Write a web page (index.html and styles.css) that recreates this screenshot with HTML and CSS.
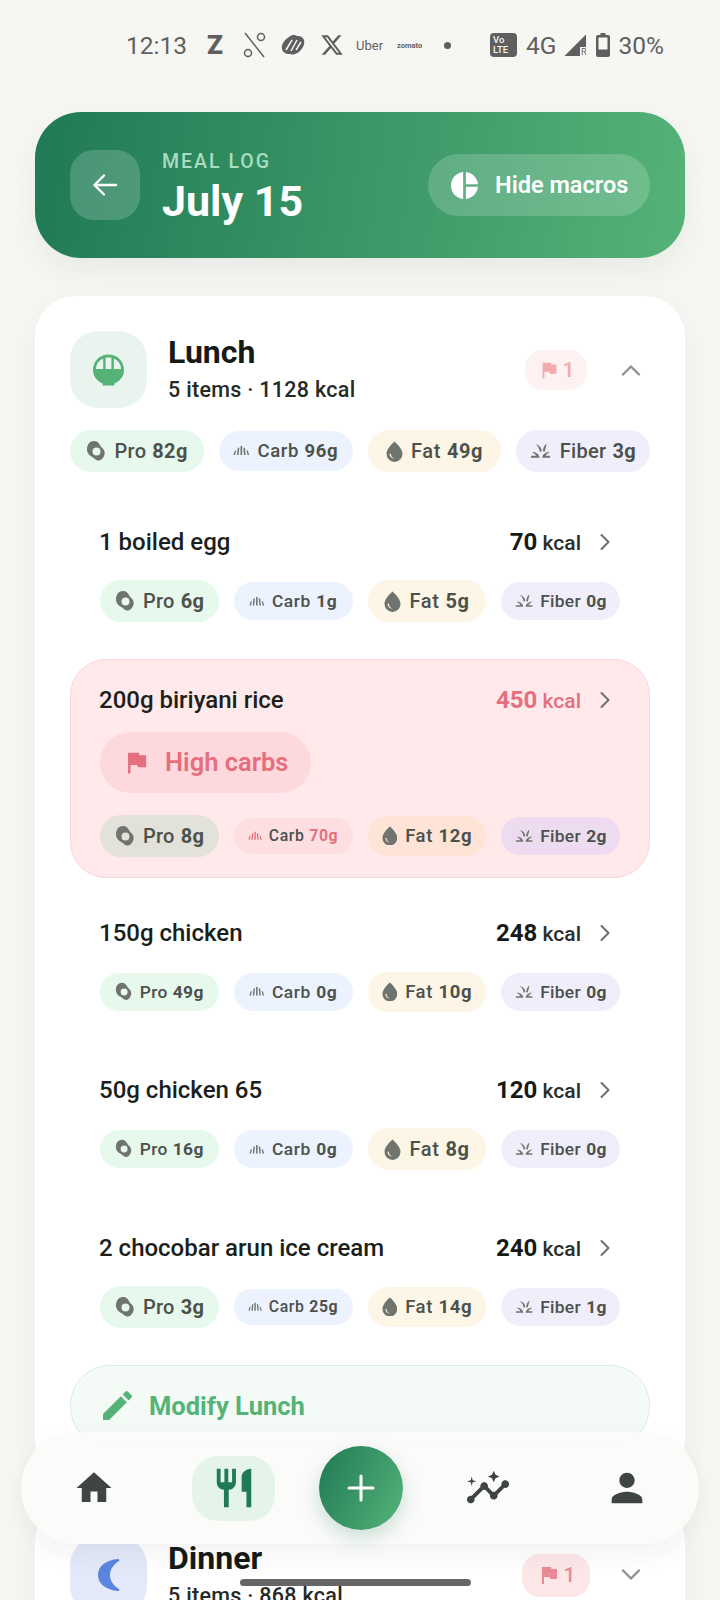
FILE: index.html
```html
<!DOCTYPE html>
<html lang="en">
<head>
    <meta charset="UTF-8">
    <meta name="viewport" content="width=device-width, initial-scale=1.0">
    <title>Meal Log - July 15</title>
    <link rel="stylesheet" href="styles.css">
</head>
<body>
    <svg class="sprites" width="0" height="0" aria-hidden="true">
        <symbol id="i-egg" viewBox="0 0 20 22"><path fill-rule="evenodd" d="M8 1c3.200 0 5 2 6.200 4.600.6 1.300 1.800 2 3 3.300 1.700 1.900 2 4.800.7 7.400C16.600 19 14.400 21 11.800 20.500 9.500 20 8.400 18 6.400 17 3.500 15.600 1 13.400 1 9.300 1 4.500 4 1 8 1zm2.500 6.500a4 4 0 1 0 0 8 4 4 0 0 0 0-8z"/></symbol>
        <symbol id="i-carb" viewBox="0 0 20 12"><path d="M.5 11.500 2.300 6h1.500L2.400 11.500zM4.800 11.500 5.800 2.500h1.800l-.9 9zM9 11.500V.5h2v11zM13.300 11.500l-.9-9h1.800l1 9zM17.600 11.500 16.200 6h1.500l1.800 5.500z"/></symbol>
        <symbol id="i-drop" viewBox="0 0 18 22"><path fill-rule="evenodd" d="M9 .5s8.500 7.300 8.500 13A8.500 8.500 0 0 1 .5 13.500C.5 7.800 9 .5 9 .5zM3.800 13.500c0 3 2.400 5.200 5.200 5.200-2.400-1-3.800-2.800-3.800-5.200z"/></symbol>
        <symbol id="i-fiber" viewBox="0 0 22 16"><path d="M1 15.500h9C9.700 11.800 6 9 2 9.500c2.500 1.400 4 3 4.500 4H1zM21 15.500h-8.200c.4-3.500 4-6.500 8-6-2.500 1.400-4 3-4.500 4H21zM10.500 9.500C9.800 6 8.500 3 5.500 1c4 1 6.500 3.800 7 7.500zM13.500 8.500C13.800 5 15 2.500 17.500.5c-.5 3-1.500 6-2.300 9z"/></symbol>
        <symbol id="i-flag" viewBox="0 0 24 24"><path d="M14.400 6 14 4H5v17h2v-7h5.600l.4 2h7V6z"/></symbol>
        <symbol id="i-next" viewBox="0 0 12 18"><path d="M2.500 2 9.500 9l-7 7" fill="none" stroke="currentColor" stroke-width="2" stroke-linecap="round" stroke-linejoin="round"/></symbol>
    </svg>

    <div class="status-bar">
        <span class="clock">12:13</span>
        <div class="status-apps">
            <span class="app-z">Z</span>
            <svg class="app-icon" width="23" height="26" viewBox="0 0 23 26"><circle cx="18" cy="5" r="3.500" fill="none" stroke="#5f5f5f" stroke-width="1.500"/><circle cx="5" cy="21" r="3.500" fill="none" stroke="#5f5f5f" stroke-width="1.500"/><path d="M2 1l19 24" stroke="#5f5f5f" stroke-width="1.500"/></svg>
            <svg class="app-icon" width="24" height="22" viewBox="0 0 24 22"><path fill="#5f5f5f" d="M8 3c3-2.500 6-2.500 8-1 3-.5 6 1 7 4 1 4-1 8-4 11-3 3-7 4-10 3-3 .5-7-1-8-5-1-4 2-9 7-12z"/><path d="M5 16 11 6M10 17l6-11M15 16l5-8" stroke="#f6f7f3" stroke-width="1.500"/></svg>
            <svg class="app-icon" width="24" height="24" viewBox="0 0 24 24"><path fill="#5f5f5f" d="M18.244 2.250h3.308l-7.227 8.260 8.502 11.240H16.170l-5.214-6.817L4.990 21.750H1.680l7.730-8.835L1.254 2.250H8.080l4.713 6.231zm-1.161 17.520h1.833L7.084 4.126H5.117z"/></svg>
            <span class="app-uber">Uber</span>
            <span class="app-zomato">zomato</span>
            <span class="status-dot"></span>
        </div>
        <div class="status-right">
            <span class="volte">Vo<br>LTE</span>
            <span class="net">4G</span>
            <span class="signal"><span class="signal-r">R</span></span>
            <svg class="battery" width="14" height="24" viewBox="0 0 14 24"><path fill-rule="evenodd" fill="#5f5f5f" d="M4.500 0h5v2H12a2 2 0 0 1 2 2v18a2 2 0 0 1-2 2H2a2 2 0 0 1-2-2V4a2 2 0 0 1 2-2h2.500zM2.500 4.500v12h9v-12z"/></svg>
            <span class="net">30%</span>
        </div>
    </div>

    <header class="top-card">
        <button class="back-btn" aria-label="Back">
            <svg width="26" height="26" viewBox="0 0 26 26" fill="none" stroke="#fff" stroke-width="2.400" stroke-linecap="round" stroke-linejoin="round"><path d="M24 13H3M12 3.500 2.500 13l9.500 9.500"/></svg>
        </button>
        <div class="top-title">
            <span class="eyebrow">MEAL LOG</span>
            <h1>July 15</h1>
        </div>
        <button class="macro-toggle">
            <svg width="27" height="27" viewBox="2 2 20 20" fill="#fff"><path d="M11 2v20c-5.070-.5-9-4.790-9-10s3.930-9.500 9-10zm2.030 0v8.990H22c-.47-4.740-4.240-8.520-8.970-8.990zm0 11.010V22c4.740-.47 8.500-4.250 8.970-8.990h-8.970z"/></svg>
            Hide macros
        </button>
    </header>

    <section class="meal-card">
        <div class="meal-head">
            <div class="meal-icon">
                <svg width="33" height="32" viewBox="0 0 34 32" fill="#55b378"><path fill-rule="evenodd" d="M17 0C8 0 1 7 1 16c0 7 5 12 10 14v2h12v-2c5-2 10-7 10-14C33 7 26 0 17 0zM14 15V3.350A13 13 0 0 1 20 3.350V15zM11.500 15V4.200A13 13 0 0 0 4 15zM22.500 15V4.200A13 13 0 0 1 30 15z"/></svg>
            </div>
            <div class="meal-title">
                <h2>Lunch</h2>
                <p>5 items · 1128 kcal</p>
            </div>
            <span class="flag-count flag-faded"><svg width="22" height="22"><use href="#i-flag"/></svg>1</span>
            <svg class="meal-chevron" width="20" height="12" viewBox="0 0 20 12" fill="none" stroke="#8f938f" stroke-width="2.400" stroke-linecap="round" stroke-linejoin="round"><path d="M2 10.500 10 2.500l8 8"/></svg>
        </div>

        <div class="chips chips-total">
            <span class="chip chip-pro chip-lg"><svg class="ic-egg"><use href="#i-egg"/></svg>Pro <b>82g</b></span>
            <span class="chip chip-carb chip-tot"><svg class="ic-carb"><use href="#i-carb"/></svg>Carb <b>96g</b></span>
            <span class="chip chip-fat chip-lg"><svg class="ic-drop"><use href="#i-drop"/></svg>Fat <b>49g</b></span>
            <span class="chip chip-fiber chip-lg"><svg class="ic-fiber"><use href="#i-fiber"/></svg>Fiber <b>3g</b></span>
        </div>

        <div class="items">
            <div class="item">
                <div class="item-row">
                    <span class="item-name">1 boiled egg</span>
                    <span class="item-kcal"><b>70</b> kcal</span>
                    <svg class="item-next" width="12" height="18"><use href="#i-next"/></svg>
                </div>
                <div class="chips">
                    <span class="chip chip-pro chip-lg"><svg class="ic-egg"><use href="#i-egg"/></svg>Pro <b>6g</b></span>
                    <span class="chip chip-carb chip-sm"><svg class="ic-carb"><use href="#i-carb"/></svg>Carb <b>1g</b></span>
                    <span class="chip chip-fat chip-lg"><svg class="ic-drop"><use href="#i-drop"/></svg>Fat <b>5g</b></span>
                    <span class="chip chip-fiber chip-sm"><svg class="ic-fiber"><use href="#i-fiber"/></svg>Fiber <b>0g</b></span>
                </div>
            </div>

            <div class="item item-flagged">
                <div class="item-row">
                    <span class="item-name">200g biriyani rice</span>
                    <span class="item-kcal"><b>450</b> kcal</span>
                    <svg class="item-next" width="12" height="18"><use href="#i-next"/></svg>
                </div>
                <div class="flag-pill"><svg width="29" height="29"><use href="#i-flag"/></svg>High carbs</div>
                <div class="chips">
                    <span class="chip chip-pro chip-lg"><svg class="ic-egg"><use href="#i-egg"/></svg>Pro <b>8g</b></span>
                    <span class="chip chip-carb chip-xs chip-over"><svg class="ic-carb"><use href="#i-carb"/></svg>Carb <b>70g</b></span>
                    <span class="chip chip-fat chip-md"><svg class="ic-drop"><use href="#i-drop"/></svg>Fat <b>12g</b></span>
                    <span class="chip chip-fiber chip-sm"><svg class="ic-fiber"><use href="#i-fiber"/></svg>Fiber <b>2g</b></span>
                </div>
            </div>

            <div class="item">
                <div class="item-row">
                    <span class="item-name">150g chicken</span>
                    <span class="item-kcal"><b>248</b> kcal</span>
                    <svg class="item-next" width="12" height="18"><use href="#i-next"/></svg>
                </div>
                <div class="chips">
                    <span class="chip chip-pro chip-sm"><svg class="ic-egg"><use href="#i-egg"/></svg>Pro <b>49g</b></span>
                    <span class="chip chip-carb chip-sm"><svg class="ic-carb"><use href="#i-carb"/></svg>Carb <b>0g</b></span>
                    <span class="chip chip-fat chip-md"><svg class="ic-drop"><use href="#i-drop"/></svg>Fat <b>10g</b></span>
                    <span class="chip chip-fiber chip-sm"><svg class="ic-fiber"><use href="#i-fiber"/></svg>Fiber <b>0g</b></span>
                </div>
            </div>

            <div class="item">
                <div class="item-row">
                    <span class="item-name">50g chicken 65</span>
                    <span class="item-kcal"><b>120</b> kcal</span>
                    <svg class="item-next" width="12" height="18"><use href="#i-next"/></svg>
                </div>
                <div class="chips">
                    <span class="chip chip-pro chip-sm"><svg class="ic-egg"><use href="#i-egg"/></svg>Pro <b>16g</b></span>
                    <span class="chip chip-carb chip-sm"><svg class="ic-carb"><use href="#i-carb"/></svg>Carb <b>0g</b></span>
                    <span class="chip chip-fat chip-lg"><svg class="ic-drop"><use href="#i-drop"/></svg>Fat <b>8g</b></span>
                    <span class="chip chip-fiber chip-sm"><svg class="ic-fiber"><use href="#i-fiber"/></svg>Fiber <b>0g</b></span>
                </div>
            </div>

            <div class="item">
                <div class="item-row">
                    <span class="item-name">2 chocobar arun ice cream</span>
                    <span class="item-kcal"><b>240</b> kcal</span>
                    <svg class="item-next" width="12" height="18"><use href="#i-next"/></svg>
                </div>
                <div class="chips">
                    <span class="chip chip-pro chip-lg"><svg class="ic-egg"><use href="#i-egg"/></svg>Pro <b>3g</b></span>
                    <span class="chip chip-carb chip-xs"><svg class="ic-carb"><use href="#i-carb"/></svg>Carb <b>25g</b></span>
                    <span class="chip chip-fat chip-md"><svg class="ic-drop"><use href="#i-drop"/></svg>Fat <b>14g</b></span>
                    <span class="chip chip-fiber chip-sm"><svg class="ic-fiber"><use href="#i-fiber"/></svg>Fiber <b>1g</b></span>
                </div>
            </div>
        </div>

        <button class="modify-btn">
            <svg width="29" height="29" viewBox="3 3 18 18" fill="#55b378"><path d="M3 17.250V21h3.750L17.810 9.940l-3.750-3.750L3 17.250zM20.710 7.040c.39-.39.39-1.020 0-1.410l-2.340-2.340c-.39-.39-1.020-.39-1.410 0l-1.830 1.830 3.750 3.750 1.830-1.830z"/></svg>
            Modify Lunch
        </button>
    </section>

    <section class="meal-card meal-card-next">
        <div class="meal-head">
            <div class="meal-icon meal-icon-night">
                <svg width="22" height="32" viewBox="0 0 22 32" fill="#5b86e0"><path d="M20 0C8 1 0 7 0 16s8 15 20 16c1 0 2-1 1-2-5-3-9-8-9-14s4-11 9-14c1-1 0-2-1-2z"/></svg>
            </div>
            <div class="meal-title">
                <h2>Dinner</h2>
                <p>5 items · 868 kcal</p>
            </div>
            <span class="flag-count"><svg width="24" height="24"><use href="#i-flag"/></svg>1</span>
            <svg class="meal-chevron" width="20" height="12" viewBox="0 0 20 12" fill="none" stroke="#8f938f" stroke-width="2.400" stroke-linecap="round" stroke-linejoin="round"><path d="M2 1.500l8 8 8-8"/></svg>
        </div>
    </section>

    <nav class="bottom-nav">
        <a class="nav-item nav-home">
            <svg width="42" height="42" viewBox="0 0 24 24" fill="#3f4540"><path d="M10 20v-6h4v6h5v-8h3L12 3 2 12h3v8z"/></svg>
        </a>
        <a class="nav-item nav-active">
            <svg width="46" height="46" viewBox="0 0 24 24" fill="#1f7a55"><path d="M11 9H9V2H7v7H5V2H3v7c0 2.120 1.660 3.840 3.750 3.970V22h2.500v-9.030C11.340 12.840 13 11.120 13 9V2h-2v7zm5-3v8h2.500v8H21V2c-2.760 0-5 2.240-5 4z"/></svg>
        </a>
        <a class="nav-fab">
            <svg width="30" height="30" viewBox="0 0 30 30" stroke="#fff" stroke-width="3" stroke-linecap="round"><path d="M15 3v24M3 15h24"/></svg>
        </a>
        <a class="nav-item nav-insights">
            <svg width="46" height="46" viewBox="0 0 24 24" fill="#3f4540"><path d="M21 8c-1.450 0-2.260 1.440-1.930 2.510l-3.550 3.560c-.3-.09-.74-.09-1.040 0l-2.550-2.550C12.270 10.450 11.460 9 10 9c-1.450 0-2.270 1.440-1.930 2.520l-4.560 4.550C2.440 15.740 1 16.550 1 18c0 1.100.9 2 2 2 1.450 0 2.260-1.440 1.930-2.510l4.550-4.560c.3.09.74.09 1.040 0l2.550 2.550C12.730 16.550 13.540 18 15 18c1.450 0 2.270-1.440 1.930-2.520l3.560-3.550c1.070.33 2.510-.48 2.510-1.930 0-1.100-.9-2-2-2z"/><path d="M15 9l.94-2.070L18 6l-2.060-.93L15 3l-.92 2.070L12 6l2.080.93zM3.500 11L4 9l2-.5L4 8l-.5-2L3 8l-2 .5L3 9z"/></svg>
        </a>
        <a class="nav-item nav-profile">
            <svg width="46" height="46" viewBox="0 0 24 24" fill="#3f4540"><path d="M12 12c2.210 0 4-1.790 4-4s-1.790-4-4-4-4 1.790-4 4 1.790 4 4 4zm0 2c-2.670 0-8 1.340-8 4v2h16v-2c0-2.660-5.330-4-8-4z"/></svg>
        </a>
    </nav>
    <div class="home-bar"></div>
</body>
</html>
```

FILE: styles.css
```css
* {
    box-sizing: border-box;
}
body {
    position: relative;
    height: 1600px;
    margin: 0;
    overflow: hidden;
    font-family: "Roboto", "Liberation Sans", sans-serif;
    background-color: #f6f7f3;
    color: #161a17;
}
button {
    border: none;
    font-family: inherit;
}
h1, h2, p {
    margin: 0;
}
.sprites {
    position: absolute;
}

/* Status bar */
.status-bar {
    display: flex;
    align-items: center;
    height: 90px;
    padding-left: 126px;
    color: #5f5f5f;
}
.clock {
    font-size: 24.5px;
    margin-right: 20px;
}
.status-apps {
    display: flex;
    align-items: center;
    gap: 15px;
}
.app-z {
    font-size: 26px;
    font-weight: 900;
    width: 16px;
    margin-right: 5px;
}
.app-uber {
    font-size: 13px;
    width: 26px;
    margin-left: -3px;
}
.app-zomato {
    font-size: 7.500px;
    font-weight: 700;
    width: 24px;
}
.status-dot {
    width: 7px;
    height: 7px;
    margin-left: 8px;
    border-radius: 50%;
    background-color: #5f5f5f;
}
.status-right {
    display: flex;
    align-items: center;
    gap: 8px;
    margin-left: 39px;
}
.volte {
    width: 27px;
    height: 24px;
    margin-right: 1px;
    padding: 2px 0 0 3px;
    border-radius: 4px;
    background-color: #5f5f5f;
    color: #f6f7f3;
    font-size: 9.500px;
    line-height: 10px;
    font-weight: 500;
}
.net {
    font-size: 24.5px;
}
.signal {
    position: relative;
    width: 22px;
    height: 22px;
    background-color: #5f5f5f;
    clip-path: polygon(100% 0, 100% 100%, 0 100%);
}
.signal-r {
    position: absolute;
    right: 0;
    bottom: -1px;
    padding-left: 1px;
    background-color: #f6f7f3;
    font-size: 9px;
    line-height: 10px;
}
.battery {
    margin-left: 2px;
}

/* Top card */
.top-card {
    display: flex;
    align-items: center;
    height: 146px;
    margin: 22px 35px 0;
    padding: 0 35px;
    border-radius: 46px;
    background: linear-gradient(98deg, #1f7a55, #55b378);
    box-shadow: 0 12px 30px rgba(40, 60, 50, 0.07);
}
.back-btn {
    display: flex;
    align-items: center;
    justify-content: center;
    width: 70px;
    height: 70px;
    border-radius: 24px;
    background-color: rgba(255, 255, 255, 0.18);
}
.top-title {
    flex: 1;
    margin: 6px 0 0 22px;
    color: #fff;
}
.eyebrow {
    display: block;
    font-size: 19.500px;
    font-weight: 500;
    line-height: 24px;
    letter-spacing: 2px;
    color: #a9dcc0;
}
.top-title h1 {
    font-size: 43px;
    font-weight: 700;
    line-height: 50px;
    margin-top: 2px;
}
.macro-toggle {
    display: flex;
    align-items: center;
    gap: 17px;
    width: 222px;
    height: 62px;
    padding-left: 23px;
    border-radius: 31px;
    background-color: rgba(255, 255, 255, 0.18);
    color: #fff;
    font-size: 23.5px;
    font-weight: 600;
}

/* Meal cards */
.meal-card {
    margin: 38px 35px 0;
    padding: 35px;
    border-radius: 40px;
    background-color: #fff;
    box-shadow: 0 10px 30px rgba(40, 60, 50, 0.05);
}
.meal-card-next {
    margin-top: 20px;
}
.meal-head {
    display: flex;
    align-items: center;
}
.meal-icon {
    display: flex;
    align-items: center;
    justify-content: center;
    width: 77px;
    height: 77px;
    border-radius: 28px;
    background-color: #eaf4ef;
}
.meal-icon-night {
    background-color: #e3e9f9;
}
.meal-title {
    flex: 1;
    margin: -4px 0 0 21px;
}
.meal-title h2 {
    font-size: 32px;
    font-weight: 700;
    line-height: 40px;
}
.meal-title p {
    margin-top: 5px;
    font-size: 21.500px;
    font-weight: 500;
    line-height: 26px;
    letter-spacing: 0.3px;
    color: #262a27;
}
.flag-count {
    display: flex;
    align-items: center;
    justify-content: center;
    gap: 3px;
    width: 68px;
    height: 43px;
    margin-right: -3px;
    border-radius: 18px;
    background-color: #fbe6e8;
    color: #e98a96;
    font-size: 21px;
    font-weight: 500;
}
.flag-count svg {
    fill: currentColor;
}
.flag-faded {
    width: 62px;
    height: 40px;
    margin-right: 0;
    background-color: #fdf1f1;
    color: #f2aaaa;
}
.meal-chevron {
    margin: 0 9px 0 34px;
}

/* Macro chips */
.chips {
    display: grid;
    grid-template-columns: repeat(4, 1fr);
    gap: 15px;
    align-items: center;
    height: 42px;
}
.chips-total {
    margin-top: 22px;
}
.chip {
    display: flex;
    align-items: center;
    justify-content: center;
    gap: 0.3em;
    border-radius: 999px;
    color: #4c514c;
    font-weight: 500;
    white-space: nowrap;
    letter-spacing: 0.3px;
}
.chip b {
    font-weight: 700;
}
.chip svg {
    flex: none;
    margin-right: 0.12em;
    fill: #6f746f;
}
.chip-lg {
    height: 42px;
    font-size: 20px;
}
.chip-tot {
    height: 40px;
    font-size: 18.500px;
}
.chip-md {
    height: 40px;
    font-size: 18.500px;
}
.chip-sm {
    height: 38px;
    font-size: 17.400px;
}
.chip-xs {
    height: 36px;
    font-size: 15.800px;
}
.ic-egg {
    width: 1em;
    height: 1.1em;
}
.ic-carb {
    width: 0.9em;
    height: 0.6em;
}
.ic-drop {
    width: 0.85em;
    height: 1.05em;
}
.ic-fiber {
    width: 1.05em;
    height: 0.76em;
}
.chip-pro {
    background-color: #e7f8ed;
}
.chip-carb {
    background-color: #ecf2fe;
    letter-spacing: 0.6px;
}
.chip-fat {
    background-color: #fdf5e6;
    letter-spacing: 0.6px;
}
.chip-fiber {
    background-color: #f1eefc;
}
.item-flagged .chip-pro {
    background-color: #e3e2da;
}
.item-flagged .chip-carb {
    background-color: #fddfe2;
}
.item-flagged .chip-fat {
    background-color: #fee4d6;
}
.item-flagged .chip-fiber {
    background-color: #eddcef;
}
.chip-over b {
    color: #e56f7e;
}
.chip-over svg {
    fill: #e56f7e;
}

/* Food items */
.items {
    display: flex;
    flex-direction: column;
    gap: 15.500px;
    margin-top: 29px;
}
.item {
    padding: 29px 30px 21px;
}
.item-row {
    display: flex;
    align-items: center;
    height: 24px;
    margin-bottom: 26px;
}
.item-name {
    flex: 1;
    font-size: 24px;
    font-weight: 500;
    margin-left: -1px;
    color: #1b1f1c;
}
.item-kcal {
    font-size: 21px;
    font-weight: 500;
    color: #2a2e2b;
}
.item-kcal b {
    font-size: 24px;
    font-weight: 700;
    color: #161a17;
}
.item-next {
    margin: 0 9px 0 18px;
    color: #6b706c;
}
.item-flagged {
    margin-bottom: -1.500px;
    padding: 28px 29px 20px;
    border: 1.500px solid #fbd5d8;
    border-radius: 36px;
    background-color: #ffe9ea;
}
.item-flagged .item-row {
    margin-bottom: 20px;
}
.item-flagged .item-kcal,
.item-flagged .item-kcal b {
    color: #e56f7e;
}
.flag-pill {
    display: flex;
    align-items: center;
    gap: 14px;
    width: 211px;
    height: 61px;
    margin-bottom: 22px;
    padding-left: 22px;
    border-radius: 31px;
    background-color: #fdd9dd;
    color: #e56f7e;
    font-size: 25.500px;
    font-weight: 600;
}
.flag-pill svg {
    fill: currentColor;
}
.modify-btn {
    display: flex;
    align-items: center;
    gap: 17px;
    width: 100%;
    height: 82px;
    margin-top: 16px;
    padding-left: 32px;
    border: 1.500px solid #d9eee2;
    border-radius: 40px;
    background-color: #f4fbf7;
    color: #55b378;
    font-size: 25.500px;
    font-weight: 700;
}

/* Floating navigation */
.bottom-nav {
    position: absolute;
    top: 1432px;
    left: 21px;
    display: flex;
    align-items: center;
    justify-content: center;
    gap: 44px;
    width: 678px;
    height: 112px;
    border-radius: 56px;
    background-color: rgba(251, 251, 250, 0.97);
    box-shadow: 0 10px 26px rgba(30, 40, 35, 0.06);
}
.nav-item {
    display: flex;
    align-items: center;
    justify-content: center;
    width: 83px;
    height: 65px;
    border-radius: 26px;
}
.nav-home {
    margin-right: 13px;
}
.nav-profile {
    margin-left: 12px;
}
.nav-insights {
    margin-left: -1px;
}
.nav-active {
    background-color: #e4f4ea;
}
.nav-fab {
    display: flex;
    align-items: center;
    justify-content: center;
    width: 84px;
    height: 84px;
    border-radius: 50%;
    background: linear-gradient(115deg, #1f7a55, #55b378);
    box-shadow: 0 8px 20px rgba(31, 122, 85, 0.22);
}
.home-bar {
    position: absolute;
    top: 1579px;
    left: 240px;
    width: 231px;
    height: 7px;
    border-radius: 4px;
    background-color: #666;
}
```
